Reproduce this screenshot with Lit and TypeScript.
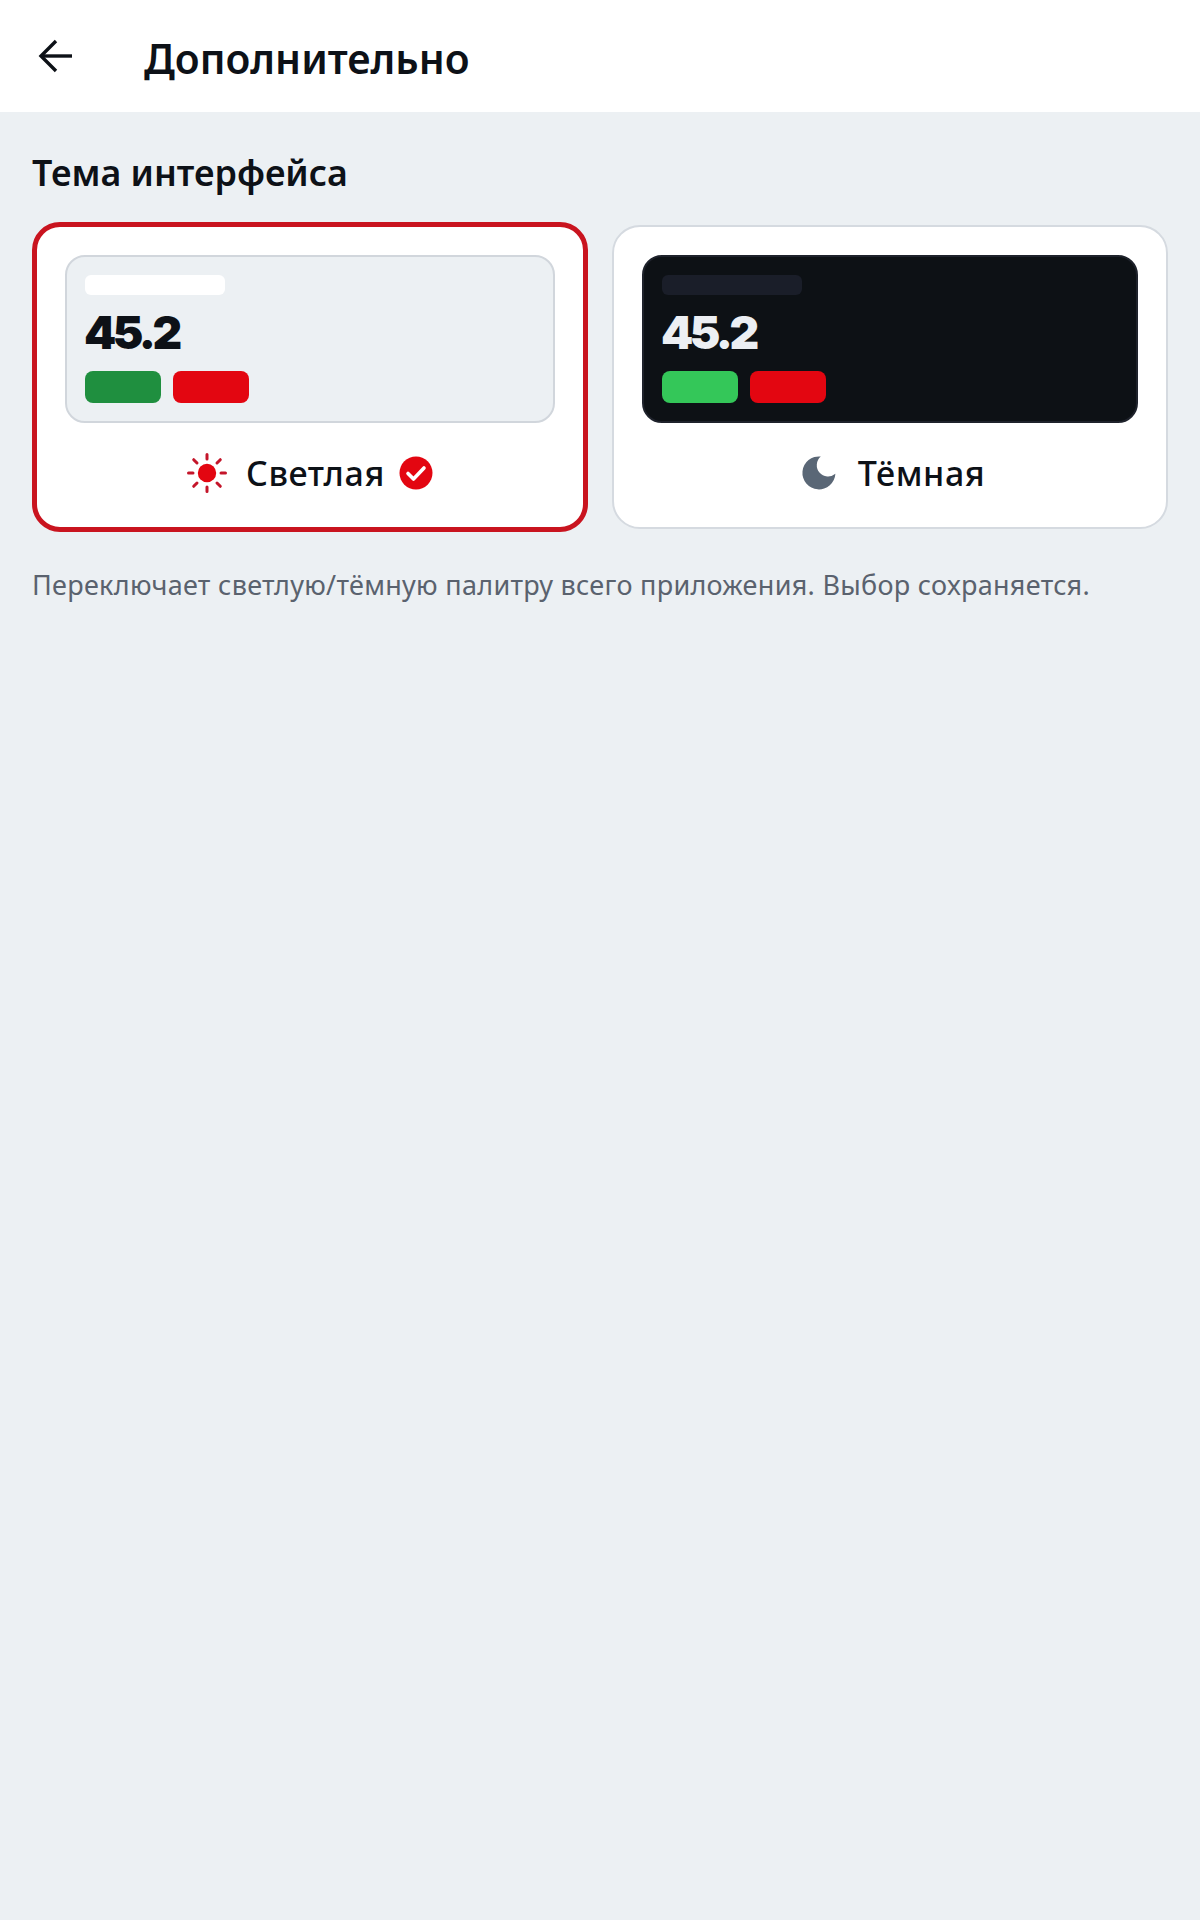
import { LitElement, html, css, svg } from "lit";
import { customElement } from "lit/decorators.js";

const sun = svg`<circle cx="20" cy="20" r="9.2" fill="#e30611"/>
<g stroke="#c4152a" stroke-width="3" stroke-linecap="round">
<path d="M20 1.5v4.5M20 34v4.5M1.5 20h4.5M34 20h4.5M6.7 6.7l3.3 3.3M30 30l3.3 3.3M6.7 33.3l3.3-3.3M30 10l3.3-3.3"/></g>`;

function preview(theme: string) {
  return html`<div class="preview ${theme}">
    <div class="bar"></div>
    <div class="num">45.2</div>
    <div class="chips"><span class="chip up"></span><span class="chip down"></span></div>
  </div>`;
}

@customElement("app-root")
export class AppRoot extends LitElement {
  static styles = css`
    :host { display: block; min-height: 1920px; background: #ecf0f3; font-family: "Noto Sans", sans-serif; color: #0d1117; }
    * { box-sizing: border-box; }
    header { height: 112px; background: #fff; display: flex; align-items: center; padding: 0 0 0 36px; }
    .back { width: 40px; height: 40px; display: block; }
    h1 { margin: 4px 0 0 68px; font-size: 40.7px; line-height: 56px; font-weight: 600; }
    main { padding: 36px 32px 0; }
    h2 { margin: 0; font-size: 35.8px; line-height: 48px; font-weight: 600; }
    .cards { display: grid; grid-template-columns: 1fr 1fr; gap: 24px; align-items: center; margin-top: 26px; }
    .card { background: #fff; border: 2px solid #d5dae0; border-radius: 28px; padding: 28px; }
    .card.sel { border: 5px solid #c9141f; }
    .preview { height: 168px; border-radius: 20px; border: 2px solid #d1d6dc; padding: 18px 18px 0; background: #ecf0f3; }
    .preview.dark { background: #0d1115; border-color: #1e222b; }
    .bar { width: 140px; height: 20px; border-radius: 6px; background: #fff; }
    .dark .bar { background: #1a1e29; }
    .num { font-family: Inter, sans-serif; font-weight: 900; font-size: 46px; line-height: 52px; margin: 11px 0 0 -1px; letter-spacing: -3.6px; color: #0d1117; }
    .dark .num { color: #eceff3; }
    .chips { display: flex; gap: 12px; margin-top: 13px; }
    .chip { width: 76px; height: 32px; border-radius: 8px; background: #e30611; }
    .chip.up { background: #1f8f3f; }
    .dark .chip.up { background: #34c759; }
    .label { height: 52px; margin-top: 24px; display: flex; align-items: center; justify-content: center; gap: 19px; font-size: 34px; font-weight: 500; letter-spacing: 0.6px; }
    .label.dark-label { padding-left: 4px; }
    .label svg { display: block; flex: none; }
    .check { margin-left: -5px; }
    p { margin: 33px 0 0; font-size: 27px; line-height: 40px; letter-spacing: 0.29px; color: #5a626e; }
  `;

  render() {
    return html`
      <header>
        <svg class="back" viewBox="0 0 40 40" fill="none" stroke="#0d1117" stroke-width="3.4">
          <path d="M36 20H6"/><path d="M20 5L5 20l15 15"/>
        </svg>
        <h1>Дополнительно</h1>
      </header>
      <main>
        <h2>Тема интерфейса</h2>
        <div class="cards">
          <div class="card sel">
            ${preview("light")}
            <div class="label">
              <svg width="40" height="40" viewBox="0 0 40 40">${sun}</svg>
              <span>Светлая</span>
              <svg class="check" width="34" height="34" viewBox="0 0 34 34">
                <circle cx="17" cy="17" r="16.5" fill="#e30611"/>
                <path d="M9 17.5l5.5 5.5L25 12" fill="none" stroke="#fff" stroke-width="3.6" stroke-linecap="round" stroke-linejoin="round"/>
              </svg>
            </div>
          </div>
          <div class="card">
            ${preview("dark")}
            <div class="label dark-label">
              <svg width="40" height="40" viewBox="0 0 40 40">
                <path d="M21.8 3.5A16.5 16.5 0 1 0 36.4 20.8A11 11 0 0 1 21.8 3.5Z" fill="#5a6776"/>
              </svg>
              <span>Тёмная</span>
            </div>
          </div>
        </div>
        <p>Переключает светлую/тёмную палитру всего приложения. Выбор сохраняется.</p>
      </main>
    `;
  }
}
